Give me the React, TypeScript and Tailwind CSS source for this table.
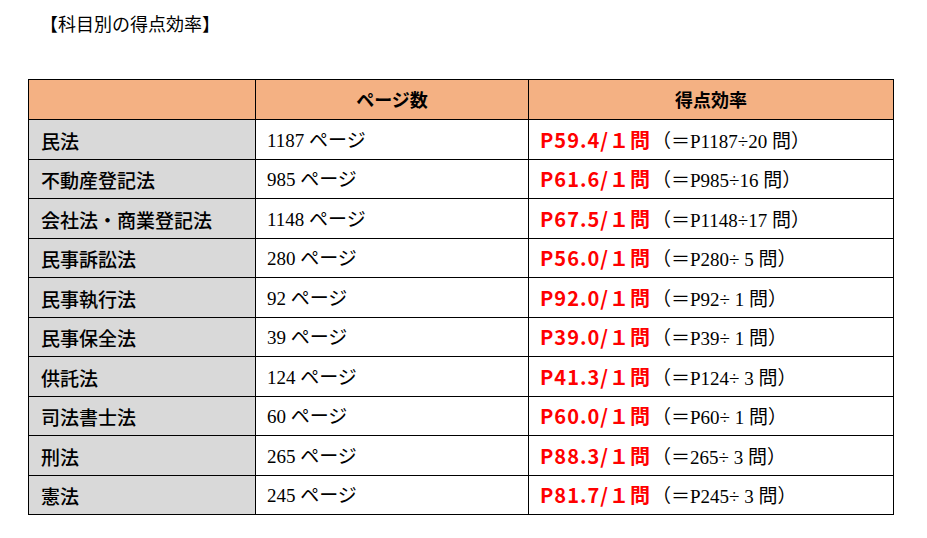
const rows = [
  { name: '民法', pages: '1187', rate: 'P59.4/', calc: '＝P1187÷20 問' },
  { name: '不動産登記法', pages: '985', rate: 'P61.6/', calc: '＝P985÷16 問' },
  { name: '会社法・商業登記法', pages: '1148', rate: 'P67.5/', calc: '＝P1148÷17 問' },
  { name: '民事訴訟法', pages: '280', rate: 'P56.0/', calc: '＝P280÷ 5 問' },
  { name: '民事執行法', pages: '92', rate: 'P92.0/', calc: '＝P92÷ 1 問' },
  { name: '民事保全法', pages: '39', rate: 'P39.0/', calc: '＝P39÷ 1 問' },
  { name: '供託法', pages: '124', rate: 'P41.3/', calc: '＝P124÷ 3 問' },
  { name: '司法書士法', pages: '60', rate: 'P60.0/', calc: '＝P60÷ 1 問' },
  { name: '刑法', pages: '265', rate: 'P88.3/', calc: '＝265÷ 3 問' },
  { name: '憲法', pages: '245', rate: 'P81.7/', calc: '＝P245÷ 3 問' },
]

const gothic = "font-['Noto_Sans_CJK_JP',sans-serif]"
const serif = "font-['Liberation_Serif','Noto_Sans_CJK_JP',serif]"

export default function App() {
  return (
    <div className="w-[927px] h-[538px] bg-white text-black">
      <div className="pl-[40px] pt-[11px] h-[79px]">
        <h1 className={`${gothic} text-[18px] leading-[24px] font-normal`}>【科目別の得点効率】</h1>
      </div>
      <table className="ml-[28px] w-[865px] border-collapse table-fixed">
        <colgroup>
          <col className="w-[227px]" />
          <col className="w-[273px]" />
          <col className="w-[365px]" />
        </colgroup>
        <thead>
          <tr className="h-[40px] bg-[#f4b183]">
            <th className="border border-black" />
            <th className={`border border-black ${gothic} text-[18px] font-bold text-center`}>ページ数</th>
            <th className={`border border-black ${gothic} text-[18px] font-bold text-center`}>得点効率</th>
          </tr>
        </thead>
        <tbody>
          {rows.map((r) => (
            <tr key={r.name} className="h-[39.5px]">
              <td className={`border border-black bg-[#d9d9d9] pl-[12px] pt-[2px] ${gothic} text-[19px] font-medium leading-none`}>
                {r.name}
              </td>
              <td className={`border border-black pl-[11px] pt-[2px] ${serif} text-[19px] leading-none`}>
                {r.pages} ページ
              </td>
              <td className="border border-black pl-[11px] pt-[2px] leading-none whitespace-nowrap">
                <span className={`${gothic} text-[20px] font-bold text-[#ff0000] tracking-[1px]`}>
                  {r.rate}１問
                </span>
                <span className={`${serif} text-[19px] ml-[1px]`}>（{r.calc}）</span>
              </td>
            </tr>
          ))}
        </tbody>
      </table>
    </div>
  )
}
